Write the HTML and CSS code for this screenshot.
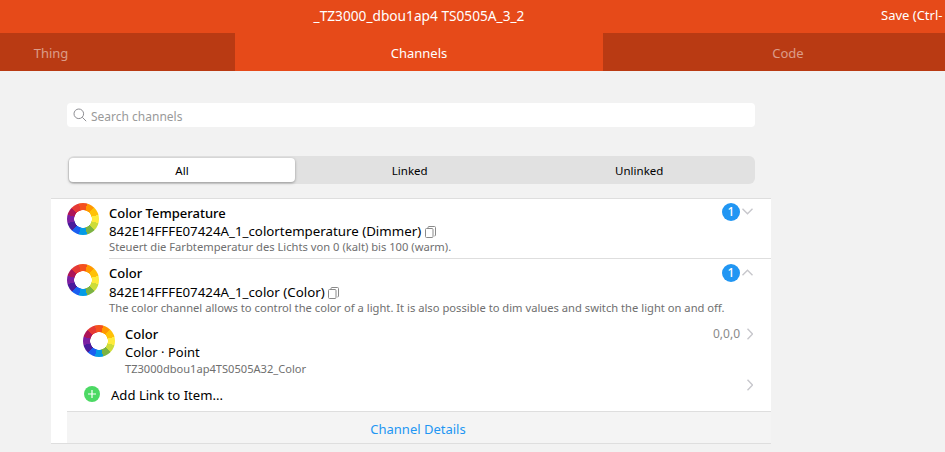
FILE: index.html
```html
<!DOCTYPE html>
<html lang="en">
<head>
    <meta charset="UTF-8" />
    <title>Thing channels</title>
    <link rel="stylesheet" href="styles.css">
</head>
<body>

<!-- Top bar, wider than the window so the outer tabs are cut off -->
<div class="topbar">
    <div class="navbar">
        <span></span>
        <div class="title">_TZ3000_dbou1ap4 TS0505A_3_2</div>
        <div class="save">Save (Ctrl-</div>
    </div>
    <div class="tabs">
        <div class="tab">Thing</div>
        <div class="tab active">Channels</div>
        <div class="tab">Code</div>
    </div>
</div>

<div class="search">
    <svg class="search-icon" viewBox="0 0 14 14" width="14" height="14">
        <circle cx="5.8" cy="5.8" r="4.8" fill="none" stroke="#8e8e93" stroke-width="1"/>
        <path d="M9.3 9.3 L13.2 13.2" stroke="#8e8e93" stroke-width="1" fill="none"/>
    </svg>
    <span class="search-text">Search channels</span>
</div>

<div class="segmented">
    <div class="segment active">All</div>
    <div class="segment">Linked</div>
    <div class="segment">Unlinked</div>
</div>

<div class="list">
    <!-- Color Temperature -->
    <div class="channel">
        <div class="wheel"></div>
        <div class="channel-text">
            <div class="name">Color Temperature</div>
            <div class="uid">842E14FFFE07424A_1_colortemperature (Dimmer)
                <svg class="copy" viewBox="0 0 11 12" width="11" height="12"><path d="M3 2.5 V1.5 Q3 .5 4 .5 H9.5 Q10.5 .5 10.5 1.5 V9 Q10.5 10 9.5 10 M1.5 2.5 H7 Q8 2.5 8 3.5 V10.5 Q8 11.5 7 11.5 H1.5 Q.5 11.5 .5 10.5 V3.5 Q.5 2.5 1.5 2.5 Z" fill="none" stroke="#8a8a8a"/></svg>
            </div>
            <div class="desc">Steuert die Farbtemperatur des Lichts von 0 (kalt) bis 100 (warm).</div>
        </div>
        <div class="badge">1</div>
        <svg class="chevron" viewBox="0 0 11 7" width="11" height="7"><path d="M.5 .8 L5.5 5.8 L10.5 .8" fill="none" stroke="#c7c7cc" stroke-width="1.4"/></svg>
    </div>

    <!-- Color -->
    <div class="channel channel-open">
        <div class="wheel"></div>
        <div class="channel-text">
            <div class="name">Color</div>
            <div class="uid">842E14FFFE07424A_1_color (Color)
                <svg class="copy" viewBox="0 0 11 12" width="11" height="12"><path d="M3 2.5 V1.5 Q3 .5 4 .5 H9.5 Q10.5 .5 10.5 1.5 V9 Q10.5 10 9.5 10 M1.5 2.5 H7 Q8 2.5 8 3.5 V10.5 Q8 11.5 7 11.5 H1.5 Q.5 11.5 .5 10.5 V3.5 Q.5 2.5 1.5 2.5 Z" fill="none" stroke="#8a8a8a"/></svg>
            </div>
            <div class="desc">The color channel allows to control the color of a light. It is also possible to dim values and switch the light on and off.</div>
        </div>
        <div class="badge">1</div>
        <svg class="chevron" viewBox="0 0 11 7" width="11" height="7"><path d="M.5 6.2 L5.5 1.2 L10.5 6.2" fill="none" stroke="#c7c7cc" stroke-width="1.4"/></svg>
    </div>

    <div class="details">
        <div class="link">
            <div class="wheel"></div>
            <div class="channel-text">
                <div class="name">Color</div>
                <div class="uid">Color · Point</div>
                <div class="desc">TZ3000dbou1ap4TS0505A32_Color</div>
            </div>
            <div class="state">0,0,0</div>
            <svg class="arrow" viewBox="0 0 6 12" width="6" height="12"><path d="M.5 .8 L5.5 6 L.5 11.2" fill="none" stroke="#c7c7cc" stroke-width="1.4"/></svg>
        </div>
        <div class="add-link">
            <svg class="plus" viewBox="0 0 16 16" width="16" height="16">
                <circle cx="8" cy="8" r="8" fill="#4cd964"/>
                <path d="M8 4 V12 M4 8 H12" stroke="#fff" stroke-width="1.2"/>
            </svg>
            <div class="add-text">Add Link to Item...</div>
            <svg class="arrow arrow-up" viewBox="0 0 6 12" width="6" height="12"><path d="M.5 .8 L5.5 6 L.5 11.2" fill="none" stroke="#c7c7cc" stroke-width="1.4"/></svg>
        </div>
        <div class="channel-footer">Channel Details</div>
    </div>
</div>

</body>
</html>
```

FILE: styles.css
```css
* { box-sizing: border-box; margin: 0; padding: 0; }
body {
    font-family: "Noto Sans", Arial, sans-serif;
    background-color: #f2f2f2;
    color: #000;
    overflow: hidden;
    height: 452px;
}

/* top bar */
.topbar {
    width: 1106px;
    margin-left: -133px;
    background-color: #e64a19;
    color: #fff;
}
.navbar {
    display: grid;
    grid-template-columns: 368px 368px 370px;
    height: 33px;
    padding-bottom: 3px;
    align-items: center;
    font-size: 13.7px;
}
.title { text-align: center; white-space: nowrap; }
.save { padding-left: 278px; font-size: 13px; white-space: nowrap; }
.tabs {
    display: grid;
    grid-template-columns: 368px 368px 370px;
    height: 38px;
}
.tab {
    background-color: #b93a13;
    color: rgba(255, 255, 255, 0.5);
    display: flex;
    align-items: center;
    justify-content: center;
    padding-top: 1px;
    font-size: 13px;
}
.tab.active {
    background-color: #e64a19;
    color: #fff;
}

/* search */
.search {
    display: flex;
    align-items: center;
    gap: 4px;
    height: 24px;
    width: 688px;
    margin: 32px 0 0 67px;
    padding-left: 6px;
    background: #fff;
    border-radius: 4px;
    color: #9a9a9a;
    font-size: 12px;
}
.search-text { padding-top: 2px; }

/* All / Linked / Unlinked */
.segmented {
    display: flex;
    height: 28px;
    width: 687px;
    margin: 29px 0 0 68px;
    padding: 2px 1px;
    background: #e1e1e1;
    border-radius: 6px;
}
.segment {
    flex: 1;
    display: flex;
    align-items: center;
    justify-content: center;
    font-size: 11.5px;
}
.segment.active {
    flex: none;
    width: 226px;
    background: #fff;
    border-radius: 4px;
    box-shadow: 0 1px 3px rgba(0, 0, 0, 0.35);
}

/* channel list */
.list {
    width: 720px;
    margin: 14px 0 0 51px;
    background: #fff;
    border-top: 1px solid #dedede;
    border-bottom: 1px solid #dedede;
}
.channel {
    display: flex;
    height: 60px;
    padding: 4px 18px 0 16px;
    position: relative;
}
.channel::after {
    content: "";
    position: absolute;
    left: 58px;
    right: 0;
    bottom: 0;
    height: 1px;
    background: #dedede;
}
.channel .channel-text { margin-top: 1px; }
.channel .desc { margin-top: -1px; }
.channel-open {
    height: 59px;
    padding-top: 5px;
}
.channel-open::after { display: none; }
.channel-open .channel-text { margin-top: 0; }
.channel-open .uid { margin-top: 1px; }
.wheel {
    flex: none;
    width: 32px;
    height: 32px;
    border-radius: 50%;
    background:
        radial-gradient(circle, #fff 0 8.5px, transparent 9px),
        conic-gradient(from -15deg,
            #f4511e 0 30deg, #ff9800 0 60deg, #ffc107 0 90deg, #ffeb3b 0 120deg,
            #cddc39 0 150deg, #7cb342 0 180deg, #039be5 0 210deg, #1a5ff0 0 240deg,
            #4a1a9c 0 270deg, #7b1fa2 0 300deg, #ad1457 0 330deg, #e53935 0 360deg);
}
.channel-text {
    flex: 1;
    min-width: 0;
    margin-left: 10px;
}
.name {
    font-size: 13px;
    font-weight: 500;
    line-height: 18px;
}
.uid {
    font-size: 13.3px;
    line-height: 18px;
    white-space: nowrap;
}
.copy { vertical-align: -2px; margin-left: 0; }
.desc {
    font-size: 11.2px;
    line-height: 15px;
    color: #6f6f6f;
    white-space: nowrap;
}
.link .uid { font-size: 13px; }
.link .desc { font-size: 11.1px; }
.badge {
    flex: none;
    width: 18px;
    height: 18px;
    border-radius: 50%;
    background: #2196f3;
    color: #fff;
    font-size: 12px;
    font-weight: 500;
    line-height: 18px;
    text-align: center;
}
.chevron { flex: none; margin: 5px 0 0 2px; }

/* expanded part */
.details { padding-left: 16px; }
.link {
    display: flex;
    height: 66px;
    padding: 7px 18px 0 16px;
}
.state {
    font-size: 12px;
    line-height: 18px;
    color: #8a8a8a;
}
.arrow { flex: none; margin: 3px 0 0 7px; }
.arrow-up { margin-top: -7px; }
.add-link {
    display: flex;
    height: 27px;
    padding: 2px 18px 0 17px;
}
.plus { flex: none; }
.add-text {
    flex: 1;
    margin-left: 11px;
    font-size: 13.1px;
    line-height: 18px;
}
.channel-footer {
    height: 32px;
    padding-right: 2px;
    background: #f4f4f4;
    border-top: 1px solid #dedede;
    color: #2196f3;
    font-size: 13px;
    line-height: 35px;
    text-align: center;
}
```
